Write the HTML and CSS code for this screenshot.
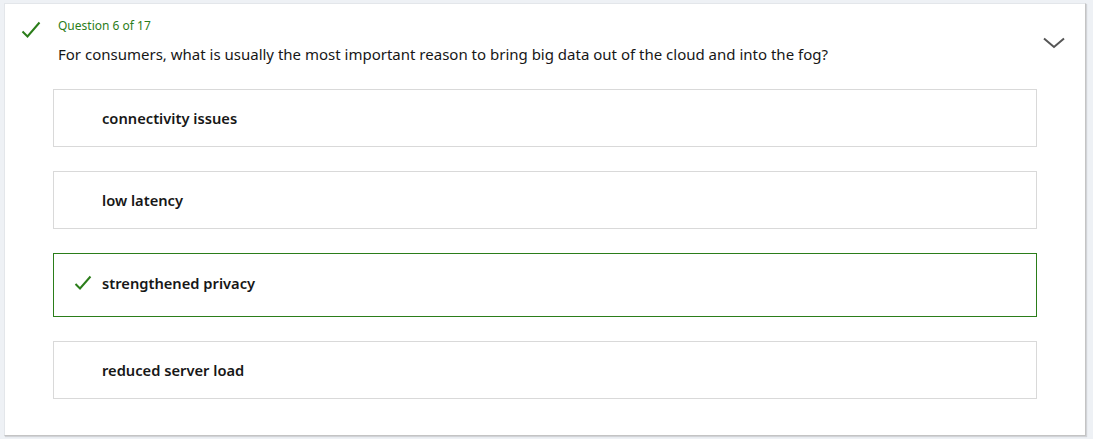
FILE: index.html
```html
<!DOCTYPE html>
<html>
<head>
<meta charset="utf-8">
<link rel="stylesheet" href="styles.css">
</head>
<body>
<div class="card">
  <div class="head">
    <svg class="mark" width="20" height="18" viewBox="0 0 20 18"><path d="M1.5 10.5 L6.5 15.5 L18.5 1.5" fill="none" stroke="#2b7d1a" stroke-width="2"/></svg>
    <div class="htext">
      <div class="qnum">Question 6 of 17</div>
      <div class="qtext">For consumers, what is usually the most important reason to bring big data out of the cloud and into the fog?</div>
    </div>
    <svg class="chev" width="22" height="12" viewBox="0 0 22 12"><path d="M1 1.5 L11 10 L21 1.5" fill="none" stroke="#555" stroke-width="2"/></svg>
  </div>
  <div class="options">
    <div class="opt"><span class="ic"></span><span class="label">connectivity issues</span></div>
    <div class="opt"><span class="ic"></span><span class="label">low latency</span></div>
    <div class="opt correct"><span class="ic"><svg width="18" height="16" viewBox="0 0 18 16"><path d="M1.5 9 L6 13.5 L16.5 1.5" fill="none" stroke="#2b7d1a" stroke-width="2"/></svg></span><span class="label">strengthened privacy</span></div>
    <div class="opt"><span class="ic"></span><span class="label">reduced server load</span></div>
  </div>
</div>
</body>
</html>
```
FILE: styles.css
```css
html, body { margin: 0; padding: 0; }
body {
  background: #eef1f5;
  font-family: "Noto Sans", "Open Sans", sans-serif;
  color: #171717;
  width: 1093px;
  height: 439px;
  overflow: hidden;
}
.card {
  margin: 3px 0 0 4px;
  width: 1082px;
  height: 433px;
  box-sizing: border-box;
  background: #fff;
  border: 1px solid #e3e6ea;
  border-right-color: #c4c4c4;
  border-bottom-color: #c4c4c4;
  box-shadow: 1px 1px 1px rgba(0,0,0,0.12);
  padding: 0 48px 0 48px;
}
.head {
  display: flex;
  position: relative;
  margin-left: -32px;
  padding-top: 14px;
  height: 85px;
  box-sizing: border-box;
}
.mark { margin-top: 3px; margin-left: 0; flex: none; }
.htext { margin-left: 17px; }
.qnum {
  font-size: 12px;
  color: #2b7d1a;
  line-height: 16px;
}
.qtext {
  font-size: 15px;
  line-height: 20px;
  margin-top: 10px;
}
.chev { position: absolute; right: -28px; top: 33px; }
.options {
  display: flex;
  flex-direction: column;
  gap: 24px;
}
.opt {
  display: flex;
  align-items: center;
  height: 58px;
  box-sizing: border-box;
  border: 1px solid #d9d9d9;
  width: 984px;
}
.opt.correct {
  height: 64px;
  padding-bottom: 5px;
  border-color: #2b7d1a;
}
.ic { width: 48px; display: flex; justify-content: center; padding-left: 10px; box-sizing: border-box; }
.label {
  font-size: 14.7px;
  font-weight: 600;
}
```
